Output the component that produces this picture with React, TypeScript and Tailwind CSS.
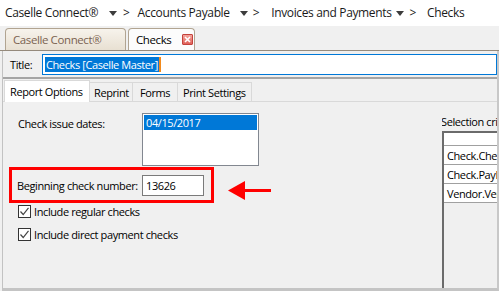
import React from "react";

function Caret() {
  return (
    <svg width="8" height="5" viewBox="0 0 8 5" className="shrink-0">
      <path d="M0 0 L8 0 L4 5 Z" fill="#3c3c3c" />
    </svg>
  );
}

function CheckBox() {
  return (
    <div className="w-[13px] h-[13px] border border-[#333] bg-white flex items-center justify-center shrink-0">
      <svg width="11" height="11" viewBox="0 0 11 11">
        <path d="M1.5 5.5 L4.2 8.5 L9.5 1.8" fill="none" stroke="#444" strokeWidth="1.2" />
      </svg>
    </div>
  );
}

export default function App() {
  return (
    <div className="w-[499px] h-[291px] overflow-hidden bg-[#f0f0f0] flex flex-col text-black font-['Open_Sans',sans-serif] text-[11px] tracking-[-0.4px] leading-none">
      {/* breadcrumb */}
      <div className="h-[26px] bg-white flex items-center pl-[5px] text-[12px] tracking-[-0.36px] text-[#1a1a1a] whitespace-nowrap shrink-0">
        <span>Caselle Connect®</span>
        <span className="ml-[11px]"><Caret /></span>
        <span className="ml-[6px]">&gt;</span>
        <span className="ml-[8px]">Accounts Payable</span>
        <span className="ml-[10px]"><Caret /></span>
        <span className="ml-[5px]">&gt;</span>
        <span className="ml-[12px]">Invoices and Payments</span>
        <span className="ml-[4px]"><Caret /></span>
        <span className="ml-[6px]">&gt;</span>
        <span className="ml-[11px]">Checks</span>
      </div>
      {/* document tabs */}
      <div className="h-[25px] flex items-end pl-[5px] gap-[2px] border-b border-[#958a7c] shrink-0">
        <div className="h-[22px] w-[121px] rounded-t-[4px] border border-b-0 border-[#b1a491] bg-gradient-to-b from-[#f7f3ec] to-[#e8e0d2] flex items-center pl-[7px] text-[11.5px] text-[#7a6250]">
          Caselle Connect®
        </div>
        <div className="h-[22px] w-[67px] rounded-t-[4px] border border-b-0 border-[#b1a491] bg-[#fcfcfc] flex items-center pl-[7px] text-[11.5px] text-black">
          <span>Checks</span>
          <div className="ml-[11px] w-[11px] h-[11px] rounded-[1px] border border-[#c4423c] bg-gradient-to-b from-[#f3a49c] to-[#e0615a] flex items-center justify-center">
            <svg width="7" height="7" viewBox="0 0 7 7">
              <path d="M1 1 L6 6 M6 1 L1 6" stroke="white" strokeWidth="1.6" />
            </svg>
          </div>
        </div>
      </div>
      {/* main */}
      <div className="h-[240px] shrink-0 flex flex-col ml-[2px] bg-[#f0f0f0] border-l border-[#c2c2c2] border-r-2 border-r-[#c8c8c8] border-b-[3px] border-b-[#c4c4c4]">
        {/* title row */}
        <div className="h-[28px] flex items-center pl-[7px] border-b-2 border-[#a5a5a5] shrink-0">
          <div className="w-[32px]">Title:</div>
          <div className="flex-1 h-[21px] border border-[#0078d7] bg-white flex items-center pl-[2px]">
            <span className="bg-[#0078d7] text-white h-[15px] flex items-center px-px">Checks [Caselle Master]</span>
            <span className="w-[2px] h-[15px] bg-[#f28a1c]" />
          </div>
        </div>
        {/* report tabs */}
        <div className="h-[23px] flex items-end pl-[1px] border-b border-[#d9d9d9] shrink-0 whitespace-nowrap">
          <div className="h-[22px] w-[86px] bg-white border border-b-0 border-[#d9d9d9] flex items-center pl-[5px] -mb-px">
            Report Options
          </div>
          <div className="h-[19px] w-[43px] border border-l-0 border-b-0 border-[#d9d9d9] flex items-center pl-[4px]">Reprint</div>
          <div className="h-[19px] w-[45px] border border-l-0 border-b-0 border-[#d9d9d9] flex items-center pl-[7px]">Forms</div>
          <div className="h-[19px] w-[74px] border border-l-0 border-b-0 border-[#d9d9d9] flex items-center pl-[5px]">Print Settings</div>
        </div>
        {/* content */}
        <div className="h-[186px] shrink-0 flex whitespace-nowrap">
          <div className="w-[439px] pl-[15px] pt-[11px] flex flex-col shrink-0">
            <div className="flex">
              <div className="w-[124px] pt-[5px]">Check issue dates:</div>
              <div className="w-[117px] h-[53px] border border-[#828790] bg-white p-px">
                <div className="h-[15px] bg-[#0078d7] text-white flex items-center pl-[2px]">04/15/2017</div>
              </div>
            </div>
            <div className="flex items-start mt-[1px]">
              <div className="-ml-[9px] w-[205px] h-[36px] border-[3px] border-[#ff0000] flex items-center">
                <div className="w-[130px] pl-[5px]">Beginning check number:</div>
                <div className="w-[62px] h-[21px] border border-[#7a7a7a] bg-white flex items-center pl-[3px]">13626</div>
              </div>
              <svg width="43" height="21" viewBox="0 0 43 21" className="ml-[14px] mt-[13px]">
                <path d="M0 10.5 L17 1 L17 20 Z" fill="#ff0000" />
                <rect x="16" y="9" width="27" height="3" fill="#ff0000" />
              </svg>
            </div>
            <div className="flex items-center mt-[2px]">
              <CheckBox />
              <span className="ml-[3px]">Include regular checks</span>
            </div>
            <div className="flex items-center mt-[10px]">
              <CheckBox />
              <span className="ml-[3px]">Include direct payment checks</span>
            </div>
          </div>
          <div className="w-[55px] shrink-0 h-[186px] flex flex-col pt-[12px] overflow-hidden">
            <div className="h-[14px] flex items-center -ml-px">Selection criteria</div>
            <div className="mt-[3px] h-[157px] border-l-2 border-t-2 border-[#6b6b6b] flex flex-col">
              <div className="h-[13px] bg-white border-b border-[#a0a0a0]" />
              <div className="h-[19px] bg-white border-b border-[#a0a0a0] flex items-center pl-[3px]">Check.CheckNumber</div>
              <div className="h-[19px] bg-white border-b border-[#a0a0a0] flex items-center pl-[3px]">Check.PayDate</div>
              <div className="h-[19px] bg-white border-b border-[#a0a0a0] flex items-center pl-[3px]">Vendor.VendorNumber</div>
            </div>
          </div>
        </div>
      </div>
    </div>
  );
}
